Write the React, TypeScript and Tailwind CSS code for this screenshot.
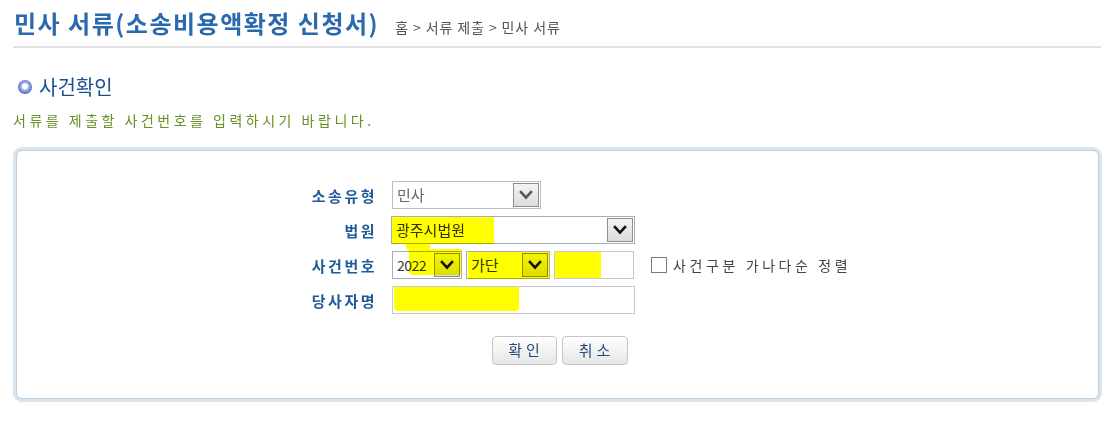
import React from 'react';

const FONT = "font-['Noto_Sans_CJK_KR','Noto_Sans',sans-serif]";

const Chevron = ({ color = '#111' }: { color?: string }) => (
  <svg width="14" height="10" viewBox="0 0 14 10">
    <polyline points="2,2 7,7.5 12,2" fill="none" stroke={color} strokeWidth="2.6" strokeLinecap="square" />
  </svg>
);

interface SelectBoxProps {
  text: string;
  width: string;
  muted?: boolean;
  textClass?: string;
  children?: React.ReactNode;
}

const SelectBox = ({ text, width, muted, textClass, children }: SelectBoxProps) => (
  <div
    className={`relative flex items-center h-[28px] bg-white border ${
      muted ? 'border-[#b9bec4]' : 'border-[#a6adb5]'
    } ${width}`}
  >
    <span className={`pl-[4px] ${textClass ?? 'text-[15px] text-[#333]'}`}>{text}</span>
    <div className="ml-auto mr-[1px] flex items-center justify-center w-[26px] h-[24px] border border-[#8e8e8e] bg-gradient-to-b from-[#f4f4f4] to-[#dcdcdc]">
      <Chevron color={muted ? '#555' : '#111'} />
    </div>
    {children}
  </div>
);

const Highlight = ({ className }: { className: string }) => (
  <span className={`absolute bg-[#ffff00] mix-blend-multiply pointer-events-none ${className}`} />
);

const Label = ({ children }: { children: React.ReactNode }) => (
  <div className="w-[82px] text-right text-[15px] font-bold tracking-[2.5px] text-[#1f5a9c] leading-none">
    {children}
  </div>
);

export default function App() {
  return (
    <div className={`w-[1114px] h-[422px] bg-white px-[13px] pt-[7px] ${FONT}`}>
      {/* title */}
      <div className="flex items-baseline h-[36px]">
        <h2 className="text-[24px] font-bold text-[#2a69ad] leading-[32px] pl-[1px] tracking-[1.5px]">
          민사 서류(소송비용액확정 신청서)
        </h2>
        <span className="ml-[16px] text-[14px] text-[#555] tracking-[0.9px]">
          홈 &gt; 서류 제출 &gt; 민사 서류
        </span>
      </div>
      <div className="h-[2px] bg-[#e1e1e1] mt-[3px]" />

      {/* section */}
      <div className="flex items-center mt-[25px] h-[28px]">
        <span className="ml-[5px] w-[14px] h-[14px] rounded-full bg-[radial-gradient(circle_at_50%_45%,#ffffff_0,#ffffff_22%,#9fb0e6_38%,#4a5fc0_75%,#2f3f95_100%)]" />
        <span className="ml-[7px] text-[20px] text-[#1d4f8f] leading-none">사건확인</span>
      </div>
      <p className="mt-[9px] text-[14px] tracking-[3.5px] text-[#6a8f22] leading-[20px]">
        서류를 제출할 사건번호를 입력하시기 바랍니다.
      </p>

      {/* form box */}
      <div className="mt-[17px] w-[1089px] p-[3px] rounded-[9px] bg-[#d8e4ee]">
        <div className="bg-white border border-[#bccddb] rounded-[6px] pt-[30px] pb-[33px]">
          <div className="ml-[278px] flex flex-col gap-[7px]">
            <div className="flex items-center gap-[15px]">
              <Label>소송유형</Label>
              <SelectBox text="민사" width="w-[149px]" muted textClass="text-[15px] text-[#666]" />
            </div>
            <div className="flex items-center gap-[14px]">
              <Label>법원</Label>
              <SelectBox text="광주시법원" width="w-[244px]">
                <Highlight className="left-0 top-0 w-[102px] h-[27px]" />
                <Highlight className="left-[14px] top-[27px] w-[24px] h-[6px] rounded-b-[3px]" />
              </SelectBox>
            </div>
            <div className="flex items-center gap-[15px]">
              <Label>사건번호</Label>
              <div className="flex items-center gap-[4px]">
                <SelectBox text="2022" width="w-[70px]" textClass="text-[14px] text-[#333] tracking-[-0.5px]">
                  <Highlight className="left-[16px] -top-[3px] w-[52px] h-[26px] rounded-bl-[4px]" />
                </SelectBox>
                <SelectBox text="가단" width="w-[84px]">
                  <Highlight className="left-[1px] top-0 w-[81px] h-[27px]" />
                </SelectBox>
                <div className="relative w-[80px] h-[28px] border border-[#c4c9cf] bg-white">
                  <Highlight className="left-0 top-0 w-[46px] h-[26px]" />
                </div>
                <label className="ml-[13px] flex items-center gap-[6px]">
                  <span className="w-[16px] h-[16px] border border-[#7a7a7a] bg-white" />
                  <span className="text-[14px] tracking-[3.6px] text-[#444]">사건구분 가나다순 정렬</span>
                </label>
              </div>
            </div>
            <div className="flex items-center gap-[15px]">
              <Label>당사자명</Label>
              <div className="relative w-[243px] h-[28px] border border-[#c4c9cf] bg-white">
                <Highlight className="left-[1px] top-0 w-[125px] h-[24px] rounded-b-[4px]" />
              </div>
            </div>
          </div>
          <div className="mt-[22px] flex justify-center gap-[5px] pl-[4px]">
            <button className="w-[65px] h-[29px] rounded-[4px] border border-[#c6c6c6] bg-gradient-to-b from-[#ffffff] to-[#e6e6e6] text-[15px] text-[#24497a] tracking-[4px] pl-[4px]">
              확인
            </button>
            <button className="w-[66px] h-[29px] rounded-[4px] border border-[#c6c6c6] bg-gradient-to-b from-[#ffffff] to-[#e6e6e6] text-[15px] text-[#24497a] tracking-[4px] pl-[4px]">
              취소
            </button>
          </div>
        </div>
      </div>
    </div>
  );
}
